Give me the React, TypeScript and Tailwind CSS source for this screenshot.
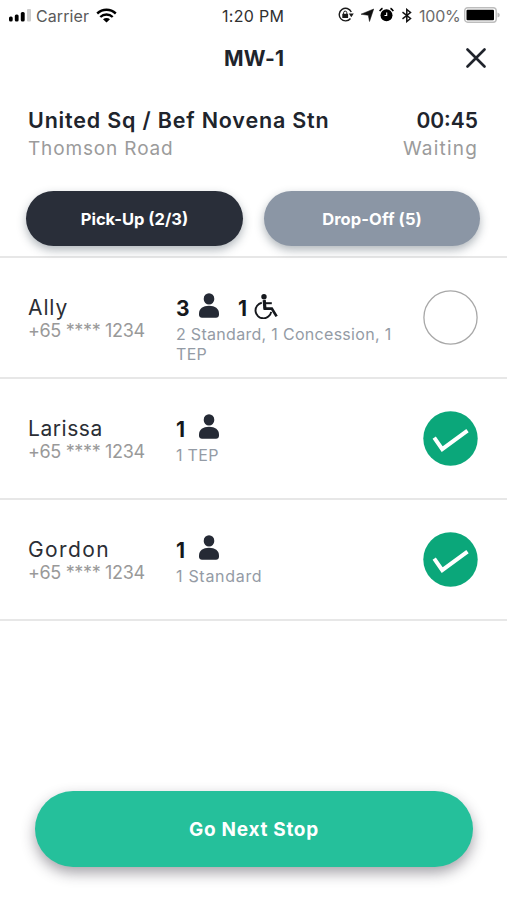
import React from "react";

type Passenger = {
  name: string;
  nameClass: string;
  seats: number;
  wheelchairs?: number;
  fare: string[];
  fareClass: string;
  boarded: boolean;
};

const passengers: Passenger[] = [
  { name: "Ally", nameClass: "tracking-[0.9px]", seats: 3, wheelchairs: 1, fare: ["2 Standard, 1 Concession, 1", "TEP"], fareClass: "tracking-[0.3px]", boarded: false },
  { name: "Larissa", nameClass: "tracking-[0.55px]", seats: 1, fare: ["1 TEP"], fareClass: "tracking-[0.3px]", boarded: true },
  { name: "Gordon", nameClass: "tracking-[1.4px]", seats: 1, fare: ["1 Standard"], fareClass: "tracking-[0.7px]", boarded: true },
];

function PersonIcon() {
  return (
    <svg className="block h-[25px] w-[20px]" viewBox="0 0 20 25" fill="#252a35">
      <ellipse cx="10" cy="5.9" rx="5.3" ry="5.7" />
      <path d="M0 20.600C0 15.700 4 12.800 10 12.800s10 2.900 10 7.800v1.200c0 1.700-1.300 3-3 3H3c-1.700 0-3-1.300-3-3z" />
    </svg>
  );
}

function WheelchairIcon() {
  return (
    <svg className="block h-[25px] w-[25px]" viewBox="0 0 25 25" fill="none" stroke="#15181d">
      <circle cx="10" cy="2.800" r="2.700" fill="#15181d" stroke="none" />
      <path d="M10.200 6l.7 8.500" strokeWidth="3.200" />
      <path d="M10.500 9.200h7.300" strokeWidth="2" />
      <path d="M9.500 14.600h8.300l4.800 7.800" strokeWidth="2.700" />
      <path d="M7.800 8.700A7.900 7.900 0 1 0 17.200 17.800" strokeWidth="1.900" />
    </svg>
  );
}

function Toggle({ checked }: { checked: boolean }) {
  return (
    <svg className="block size-[55px]" viewBox="0 0 55 55" fill="none">
      {checked ? (
        <>
          <circle cx="27.500" cy="27.500" r="27.200" fill="#0ba77a" />
          <path d="M11.200 26.700l8 11.500 25.300-18.600" stroke="#fff" strokeWidth="4" />
        </>
      ) : (
        <circle cx="27.500" cy="27.500" r="26.600" stroke="#a8a8a8" strokeWidth="1.300" />
      )}
    </svg>
  );
}

function StatusBar() {
  return (
    <div className="flex h-[32px] items-center pl-[9px] pr-[7px] text-[16px] text-[#303030]">
      <div className="flex w-[213px] items-center">
        <svg className="block h-[14px] w-[23px]" viewBox="0 0 23 14">
          <rect x="0" y="7.500" width="3.700" height="5" rx="1.500" fill="#000" />
          <rect x="5.800" y="5.500" width="3.800" height="7" rx="1.500" fill="#000" />
          <rect x="11.800" y="3" width="3.900" height="9.500" rx="1.500" fill="#000" />
          <rect x="18" y="0" width="4" height="12.500" rx="1" fill="#cdcdcd" />
        </svg>
        <span className="ml-[4px] w-[57px] whitespace-nowrap tracking-[0.1px] text-[#5a5a5a]">Carrier</span>
        <svg className="ml-[3px] mb-[2px] block h-[15px] w-[21px]" viewBox="0 0 21 15" fill="none" stroke="#000">
          <path d="M1.200 5.500C6.600 0.500 14.400 0.500 19.800 5.500" strokeWidth="2.400" />
          <path d="M4.300 9C7.800 5.700 13.200 5.700 16.700 9" strokeWidth="2.400" />
          <path d="M7 11.300C9 9.600 12 9.600 14 11.300L10.500 14.500z" fill="#000" stroke="none" />
        </svg>
      </div>
      <span className="w-[116px] whitespace-nowrap tracking-[0.3px]">1:20 PM</span>
      <svg className="mb-[2px] block h-[16px] w-[16px]" viewBox="0 0 16 16" fill="none" stroke="#1a1a1a">
        <path d="M13.300 5A6.300 6.300 0 1 0 12.500 11.500" strokeWidth="1.400" />
        <path d="M10.800 6.500h5l-2.500 3.800z" fill="#1a1a1a" stroke="none" />
        <rect x="4.300" y="6.800" width="5.800" height="4.200" fill="#1a1a1a" stroke="none" />
        <path d="M5.600 7V5.700a1.600 1.600 0 0 1 3.200 0V7" strokeWidth="1" />
      </svg>
      <svg className="ml-[7px] mb-[2px] block h-[14px] w-[13px]" viewBox="0 0 13 14" fill="#111" stroke="#111" strokeWidth="0.500">
        <path d="M12.700 1L8.500 13.500 7.300 7.300 0 6.200z" />
      </svg>
      <svg className="ml-[5px] mb-[3px] block h-[15px] w-[15px]" viewBox="0 0 15 15" fill="none">
        <circle cx="7.500" cy="8.300" r="6" fill="#000" />
        <path d="M0.700 4.200A7 7 0 0 1 3.500 1.200M14.300 4.200A7 7 0 0 0 11.500 1.200" stroke="#000" strokeWidth="1.600" />
        <path d="M7.700 5.500V8.500H5.500" stroke="#fff" strokeWidth="1.100" />
      </svg>
      <svg className="ml-[8px] mb-[2px] block h-[15px] w-[10px]" viewBox="0 0 10 15" fill="none" stroke="#111" strokeWidth="1.500">
        <path d="M0.500 4.200L8.500 10.500 4.800 13.500V1.500L8.500 4.500 0.500 10.800" />
      </svg>
      <span className="ml-[7px] w-[45px] whitespace-nowrap tracking-[-0.2px] text-[#6b6b6b]">100%</span>
      <svg className="mb-[2px] block h-[16px] w-[36px]" viewBox="0 0 36 16">
        <rect x="0.700" y="0.700" width="31.500" height="14.500" rx="3" fill="#fff" stroke="#bdbdbd" strokeWidth="1.400" />
        <rect x="2.500" y="2.800" width="27.500" height="10.400" rx="1" fill="#000" />
        <path d="M33.500 5.500q2.300.5 2.300 2.500t-2.300 2.500z" fill="#bdbdbd" />
      </svg>
    </div>
  );
}

function PassengerRow({ passenger }: { passenger: Passenger }) {
  return (
    <li className="flex h-[121.15px] border-b-2 border-[#e7e7e7] pl-[28px] pr-[29px]">
      <div className="w-[148px] whitespace-nowrap pt-[37px]">
        <div className={"h-[24px] text-[21px] leading-[25px] text-[#2b2e35] " + passenger.nameClass}>{passenger.name}</div>
        <div className="h-[24px] text-[18px] leading-[24px] tracking-[-0.35px] text-[#999999]">+65 **** 1234</div>
      </div>
      <div className="flex-1 whitespace-nowrap pt-[35px]">
        <div className="flex h-[31px] items-start text-[21px] font-bold leading-[32px] text-[#15181d]">
          <span className="w-[23px]">{passenger.seats}</span>
          <PersonIcon />
          {passenger.wheelchairs && (
            <>
              <span className="ml-[19px] w-[16px]">{passenger.wheelchairs}</span>
              <span className="pt-[1px]"><WheelchairIcon /></span>
            </>
          )}
        </div>
        {passenger.fare.map((line) => (
          <div key={line} className={"h-[20px] text-[16px] leading-[20px] text-[#949ba5] " + passenger.fareClass}>{line}</div>
        ))}
      </div>
      <div className="pt-[32px]"><Toggle checked={passenger.boarded} /></div>
    </li>
  );
}

export default function App() {
  return (
    <main className="flex h-[900px] w-[507px] flex-col overflow-hidden bg-white font-['Inter','Liberation_Sans',sans-serif]">
      <StatusBar />
      <header className="flex h-[52px] items-center justify-between pl-[224px] pr-[21px]">
        <h1 className="pt-[1px] text-[21px] font-bold tracking-[0.2px] text-[#20242c]">MW-1</h1>
        <svg className="block size-[20px]" viewBox="0 0 20 20" fill="none" stroke="#20242c" strokeWidth="2.600" strokeLinecap="round">
          <path d="M1.500 1.500l17 17M18.500 1.500l-17 17" />
        </svg>
      </header>
      <section className="h-[174px] border-b-2 border-[#e7e7e7] pt-[22px]">
        <div className="flex justify-between whitespace-nowrap pl-[28px] pr-[29px]">
          <div>
            <div className="h-[28px] text-[21.500px] font-semibold leading-[29px] tracking-[0.82px] text-[#20242c]">United Sq / Bef Novena Stn</div>
            <div className="h-[28px] text-[19px] leading-[30px] tracking-[0.85px] text-[#9b9b9b]">Thomson Road</div>
          </div>
          <div className="text-right">
            <div className="h-[28px] text-[21px] font-semibold leading-[29px] text-[#20242c]">00:45</div>
            <div className="h-[28px] text-[19px] leading-[30px] tracking-[1.2px] text-[#9b9b9b]">Waiting</div>
          </div>
        </div>
        <div className="mt-[29px] flex gap-[21px] pl-[26px] text-[16.500px] font-bold text-white">
          <button className="h-[55px] w-[217px] rounded-full bg-[#292e39] pt-[1px] shadow-[0_4px_10px_rgba(30,45,60,0.35)]">Pick-Up (2/3)</button>
          <button className="h-[55px] w-[216px] rounded-full bg-[#8b96a5] pt-[1px] tracking-[0.1px] shadow-[0_4px_10px_rgba(30,45,60,0.35)]">Drop-Off (5)</button>
        </div>
      </section>
      <ul className="h-[364px]">
        {passengers.map((p) => <PassengerRow key={p.name} passenger={p} />)}
      </ul>
      <button className="ml-[35px] mt-[169px] h-[76px] w-[438px] rounded-full bg-[#25c09b] pt-[2px] text-[19px] font-bold tracking-[0.7px] text-white shadow-[0_6px_14px_rgba(40,35,50,0.42)]">Go Next Stop</button>
    </main>
  );
}
